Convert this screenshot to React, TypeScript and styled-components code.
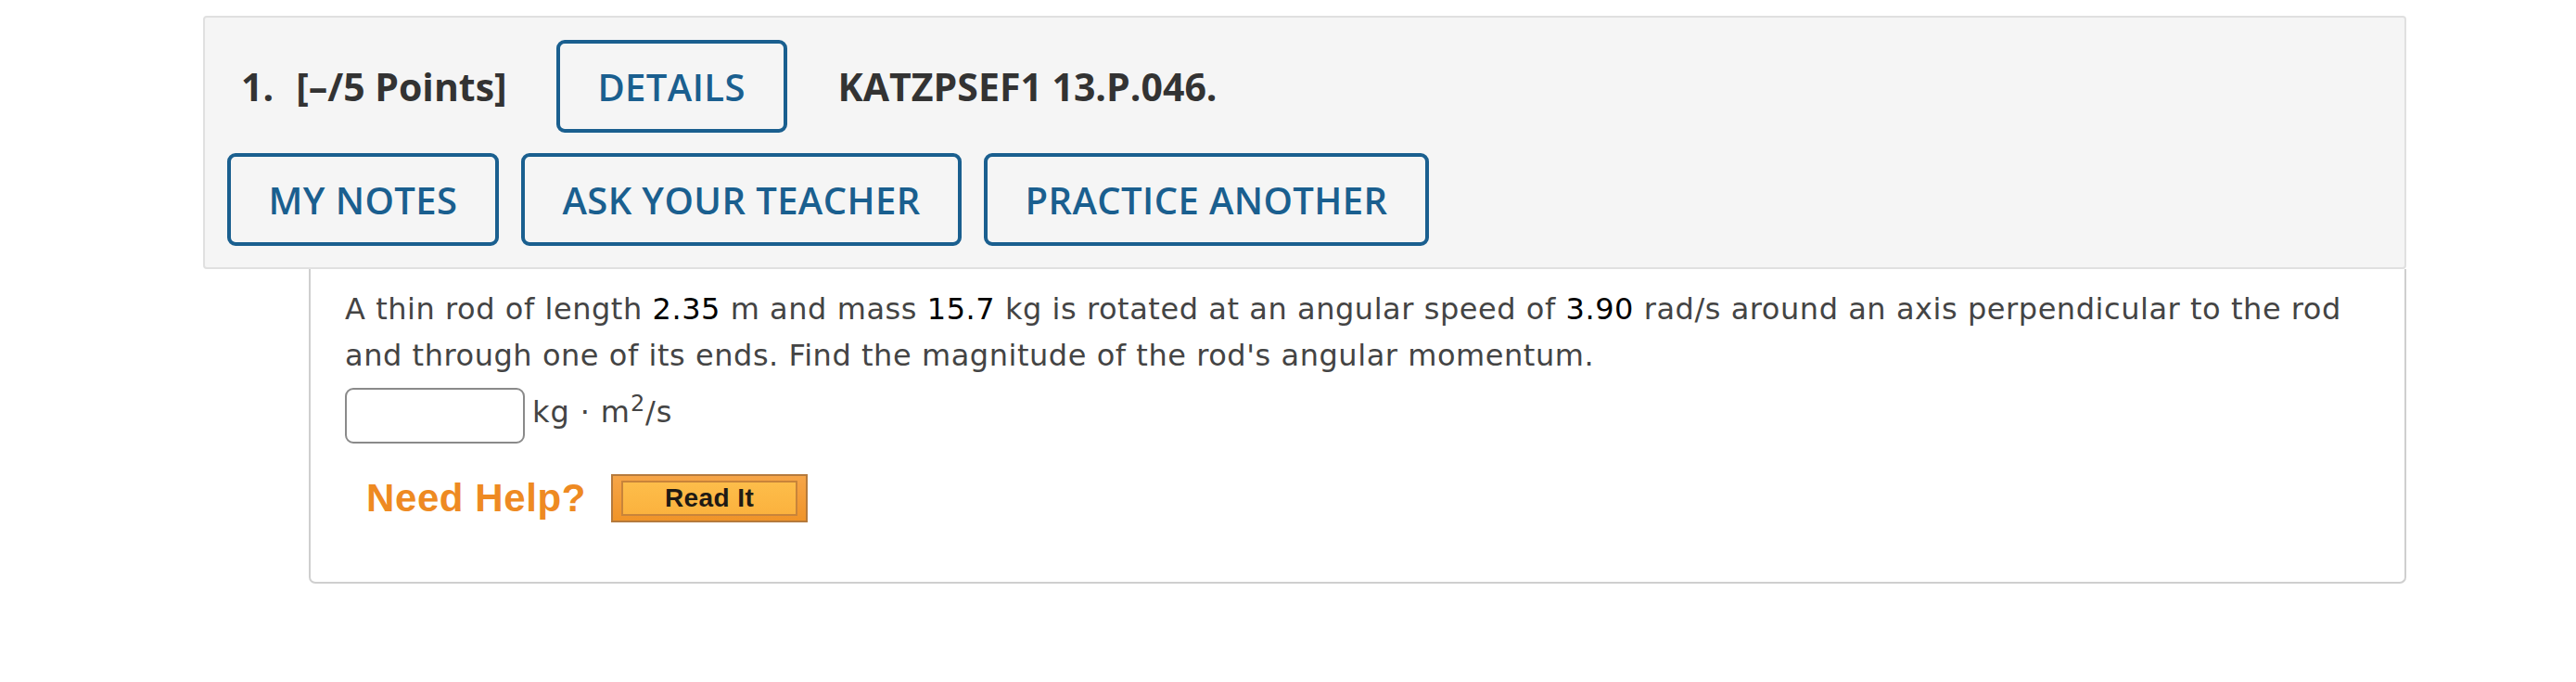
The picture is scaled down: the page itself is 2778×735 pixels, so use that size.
import React from "react";
import styled, { createGlobalStyle } from "styled-components";

const GlobalStyle = createGlobalStyle`
  html, body {
    margin: 0;
    padding: 0;
    background: #fff;
  }
`;

const Page = styled.div`
  padding: 17px 0 0 219px;
  width: 2376px;
`;

const Header = styled.div`
  box-sizing: border-box;
  height: 273px;
  background: #f5f5f5;
  border: 2px solid #e0e0e0;
  border-radius: 4px;
  padding: 24px 24px;
  display: flex;
  flex-direction: column;
  gap: 22px;
  font-family: "Open Sans", "Noto Sans", sans-serif;
`;

const Row = styled.div<{ $indent?: number }>`
  display: flex;
  align-items: center;
  height: 100px;
  padding-left: ${(p) => p.$indent ?? 0}px;
`;

const Number = styled.span`
  font-size: 41px;
  font-weight: 700;
  color: #333;
  margin-right: 24px;
`;

const Label = styled.span<{ $gap?: number }>`
  font-size: 41px;
  font-weight: 700;
  color: #333;
  margin-right: ${(p) => p.$gap ?? 0}px;
`;

const OutlineButton = styled.button<{ $width: number }>`
  box-sizing: border-box;
  width: ${(p) => p.$width}px;
  height: 100px;
  background: transparent;
  border: 4px solid #1a5f8f;
  border-radius: 9px;
  color: #1a5f8f;
  font-family: "Open Sans", "Noto Sans", sans-serif;
  font-size: 40px;
  font-weight: 600;
  letter-spacing: 0.4px;
  padding: 0;
  margin-right: 24px;
  display: flex;
  align-items: center;
  justify-content: center;
  cursor: pointer;
`;

const DetailsButton = styled(OutlineButton)`
  margin-right: 55px;
`;

const Body = styled.div`
  box-sizing: border-box;
  margin-left: 114px;
  height: 339px;
  border: 2px solid #cfcfcf;
  border-top: none;
  border-radius: 0 0 7px 7px;
  padding: 18px 30px 0 37px;
  font-family: Verdana, "DejaVu Sans", sans-serif;
  font-size: 32px;
  letter-spacing: 0.55px;
  line-height: 50px;
  color: #444;
`;

const Question = styled.p`
  margin: 0;
`;

const Value = styled.span`
  color: #000;
`;

const AnswerRow = styled.div`
  display: flex;
  align-items: center;
  margin-top: 10px;
  gap: 8px;
`;

const AnswerInput = styled.input`
  box-sizing: border-box;
  width: 194px;
  height: 60px;
  border: 2px solid #8a8a8a;
  border-radius: 9px;
  background: #fff;
`;

const Unit = styled.span`
  line-height: 40px;
  margin-top: -8px;
  letter-spacing: 0.9px;

  sup {
    font-size: 24px;
    line-height: 0;
  }
`;

const HelpRow = styled.div`
  display: flex;
  align-items: center;
  margin-top: 33px;
  padding-left: 23px;
  gap: 27px;
`;

const NeedHelp = styled.span`
  font-family: Arial, "Liberation Sans", sans-serif;
  font-weight: 700;
  font-size: 42px;
  line-height: 52px;
  color: #ee8a22;
  letter-spacing: 0.6px;
`;

const ReadItOuter = styled.button`
  box-sizing: border-box;
  width: 212px;
  height: 52px;
  padding: 5px 9px;
  border: 2px solid #b57a3c;
  background: linear-gradient(#f6a548, #f09428);
  display: flex;
  cursor: pointer;
`;

const ReadItInner = styled.span`
  box-sizing: border-box;
  flex: 1;
  border: 2px solid #c8843a;
  background: linear-gradient(#fdbd4a, #fbb23e);
  display: flex;
  align-items: center;
  justify-content: center;
  font-family: Arial, "Liberation Sans", sans-serif;
  font-weight: 700;
  font-size: 28px;
  letter-spacing: 0.4px;
  color: #1e1a14;
`;

export default function App() {
  return (
    <Page>
      <GlobalStyle />
      <Header>
        <Row $indent={15}>
          <Number>1.</Number>
          <Label $gap={53}>[–/5 Points]</Label>
          <DetailsButton $width={249}>DETAILS</DetailsButton>
          <Label>KATZPSEF1 13.P.046.</Label>
        </Row>
        <Row>
          <OutlineButton $width={293}>MY NOTES</OutlineButton>
          <OutlineButton $width={475}>ASK YOUR TEACHER</OutlineButton>
          <OutlineButton $width={480}>PRACTICE ANOTHER</OutlineButton>
        </Row>
      </Header>
      <Body>
        <Question>
          A thin rod of length <Value>2.35</Value> m and mass <Value>15.7</Value> kg is
          rotated at an angular speed of <Value>3.90</Value> rad/s around an axis
          perpendicular to the rod and through one of its ends. Find the magnitude of
          the rod's angular momentum.
        </Question>
        <AnswerRow>
          <AnswerInput type="text" />
          <Unit>
            kg · m<sup>2</sup>/s
          </Unit>
        </AnswerRow>
        <HelpRow>
          <NeedHelp>Need Help?</NeedHelp>
          <ReadItOuter>
            <ReadItInner>Read It</ReadItInner>
          </ReadItOuter>
        </HelpRow>
      </Body>
    </Page>
  );
}
